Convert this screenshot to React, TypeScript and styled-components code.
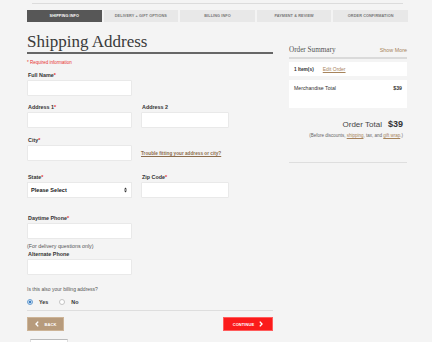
import styled, { createGlobalStyle } from "styled-components";

const GlobalStyle = createGlobalStyle`
  html, body {
    margin: 0;
    padding: 0;
    background: #f4f4f4;
    font-family: "Liberation Sans", Arial, sans-serif;
    color: #333;
  }
`;

const Page = styled.div`
  width: 432px;
  height: 342px;
  overflow: hidden;
  background: #f4f4f4;
`;

const TopRule = styled.div`
  margin: 3px 29px 0 32px;
  height: 1px;
  background: #dcdcdc;
`;

const StepBar = styled.div`
  display: flex;
  gap: 2px;
  margin: 6px 24px 0 27px;
  height: 12px;
`;

const Step = styled.div<{ $active?: boolean }>`
  flex: 1;
  display: flex;
  align-items: center;
  justify-content: center;
  background: ${(p) => (p.$active ? "#575757" : "#e8e8e8")};
  color: ${(p) => (p.$active ? "#fff" : "#777")};
  font-size: 3.8px;
  font-weight: 700;
  letter-spacing: 0.1px;
  text-transform: uppercase;
`;

const Content = styled.div`
  display: flex;
  gap: 16px;
  padding: 0 25px 0 27px;
`;

const FormColumn = styled.div`
  width: 246px;
  display: flex;
  flex-direction: column;
`;

const Heading = styled.h1`
  margin: 9px 0 0;
  font-family: "Liberation Serif", "Times New Roman", serif;
  font-weight: 400;
  font-size: 17px;
  line-height: 21px;
  color: #3a3a3a;
  border-bottom: 2px solid #666;
`;

const Required = styled.div`
  margin-top: 6px;
  font-size: 4.5px;
  line-height: 6px;
  color: #e8312f;
`;

const Row = styled.div<{ $mt: number }>`
  display: grid;
  grid-template-columns: 105px 88px;
  column-gap: 9px;
  margin-top: ${(p) => p.$mt}px;
`;

const Field = styled.div`
  display: flex;
  flex-direction: column;
`;

const Label = styled.label`
  display: block;
  height: 8px;
  line-height: 7px;
  font-size: 5.4px;
  font-weight: 700;
  color: #333;
  padding-left: 1px;
`;

const Star = styled.span`
  color: #e8312f;
`;

const Input = styled.div<{ $h?: number }>`
  height: ${(p) => p.$h ?? 16}px;
  box-sizing: border-box;
  background: #fff;
  border: 1px solid #e9e9e9;
  border-radius: 1px;
`;

const Select = styled.div`
  height: 16px;
  box-sizing: border-box;
  background: #fff;
  border: 1px solid #e9e9e9;
  display: flex;
  align-items: center;
  justify-content: space-between;
  padding: 0 4px 0 3px;
  font-size: 5.6px;
  font-weight: 700;
  color: #222;
`;

const TroubleLink = styled.a`
  align-self: end;
  padding-bottom: 5px;
  font-size: 4.7px;
  font-weight: 700;
  color: #8c6d4c;
  text-decoration: underline;
`;

const Note = styled.div<{ $mt: number; $size?: number }>`
  margin-top: ${(p) => p.$mt}px;
  font-size: ${(p) => p.$size ?? 5.3}px;
  line-height: 7px;
  color: #555;
`;

const SingleField = styled.div<{ $mt: number }>`
  width: 105px;
  margin-top: ${(p) => p.$mt}px;
`;

const RadioRow = styled.div`
  display: flex;
  align-items: center;
  gap: 3px;
  margin-top: 5px;
  height: 8px;
  font-size: 5.4px;
  font-weight: 700;
  color: #333;
`;

const Radio = styled.span<{ $on?: boolean }>`
  width: 6px;
  height: 6px;
  box-sizing: border-box;
  border-radius: 50%;
  border: 1px solid ${(p) => (p.$on ? "#6a9ed0" : "#c4c4c4")};
  background: ${(p) => (p.$on ? "radial-gradient(circle, #3d7ec2 0 1.4px, #cfe2f5 1.6px)" : "#fff")};
  margin-left: ${(p) => (p.$on ? 0 : 8)}px;
  margin-right: 3px;
`;

const Separator = styled.div<{ $mt: number }>`
  margin-top: ${(p) => p.$mt}px;
  height: 1px;
  background: #dedede;
`;

const ButtonRow = styled.div`
  display: flex;
  justify-content: space-between;
  margin-top: 6px;
`;

const ActionButton = styled.button<{ $variant: "back" | "next" }>`
  height: 14px;
  width: ${(p) => (p.$variant === "back" ? 37 : 50)}px;
  padding: 0;
  border: 1px solid ${(p) => (p.$variant === "back" ? "#cdb497" : "#ff5c5c")};
  background: ${(p) => (p.$variant === "back" ? "#b79b7c" : "#fb1b1b")};
  color: #fff;
  font-family: "Liberation Sans", Arial, sans-serif;
  font-size: 4px;
  font-weight: 700;
  letter-spacing: 0.1px;
  display: flex;
  align-items: center;
  justify-content: center;
  gap: ${(p) => (p.$variant === "back" ? 6 : 5)}px;
`;

const Chevron = ({ dir }: { dir: "left" | "right" }) => (
  <svg width="4" height="6" viewBox="0 0 4 6">
    <path
      d={dir === "left" ? "M3.2 0.6 L1 3 L3.2 5.4" : "M0.8 0.6 L3 3 L0.8 5.4"}
      fill="none"
      stroke="#fff"
      strokeWidth="1.4"
    />
  </svg>
);

const SelectArrows = () => (
  <svg width="3" height="6" viewBox="0 0 3 6">
    <path d="M0 2.4 L1.5 0.4 L3 2.4 Z M0 3.6 L1.5 5.6 L3 3.6 Z" fill="#333" />
  </svg>
);

const FooterStub = styled.div`
  margin-top: 8px;
  margin-left: 3px;
  width: 36px;
  height: 10px;
  border-top: 1px solid #bbb;
  border-left: 1px solid #ddd;
  border-right: 1px solid #ddd;
  background: #fff;
`;

const SummaryColumn = styled.aside`
  width: 118px;
  margin-top: 21px;
  display: flex;
  flex-direction: column;
`;

const SummaryHeader = styled.div`
  display: flex;
  justify-content: space-between;
  align-items: center;
  height: 14px;
  border-bottom: 2px solid #dadada;
`;

const SummaryTitle = styled.span`
  font-family: "Liberation Serif", "Times New Roman", serif;
  font-size: 7.2px;
  color: #555;
`;

const TanLink = styled.a<{ $size?: number; $underline?: boolean }>`
  color: #a7845c;
  font-size: ${(p) => p.$size ?? 5.6}px;
  text-decoration: ${(p) => (p.$underline ? "underline" : "none")};
`;

const SummaryBox = styled.div<{ $h: number; $mt: number }>`
  margin-top: ${(p) => p.$mt}px;
  height: ${(p) => p.$h}px;
  background: #fff;
  box-sizing: border-box;
  padding: 0 5px;
  font-size: 4.8px;
  color: #333;
`;

const ItemLine = styled.div`
  display: flex;
  align-items: center;
  height: 100%;
  gap: 9px;
`;

const MerchLine = styled.div`
  display: flex;
  justify-content: space-between;
  padding-top: 5px;
  font-size: 5.2px;
`;

const Strong = styled.span`
  font-weight: 700;
`;

const OrderTotal = styled.div`
  margin-top: 11px;
  display: flex;
  justify-content: flex-end;
  align-items: baseline;
  gap: 6px;
  padding-right: 4px;
  line-height: 10px;
  font-size: 8px;
  color: #444;
`;

const TotalValue = styled.span`
  font-size: 9px;
  font-weight: 700;
  color: #333;
`;

const FinePrint = styled.div`
  margin-top: 3px;
  text-align: right;
  padding-right: 4px;
  font-size: 4.5px;
  line-height: 6px;
  color: #666;
`;

const FineLink = styled.a`
  color: #a7845c;
  text-decoration: underline;
`;

const steps = [
  "Shipping Info",
  "Delivery + Gift Options",
  "Billing Info",
  "Payment & Review",
  "Order Confirmation",
];

export default function App() {
  return (
    <Page>
      <GlobalStyle />
      <TopRule />
      <StepBar>
        {steps.map((s, i) => (
          <Step key={s} $active={i === 0}>
            {s}
          </Step>
        ))}
      </StepBar>
      <Content>
        <FormColumn>
          <Heading>Shipping Address</Heading>
          <Required>* Required information</Required>

          <SingleField $mt={6}>
            <Label>
              Full Name<Star>*</Star>
            </Label>
            <Input />
          </SingleField>

          <Row $mt={8}>
            <Field>
              <Label>
                Address 1<Star>*</Star>
              </Label>
              <Input />
            </Field>
            <Field>
              <Label>Address 2</Label>
              <Input />
            </Field>
          </Row>

          <Row $mt={9}>
            <Field>
              <Label>
                City<Star>*</Star>
              </Label>
              <Input />
            </Field>
            <TroubleLink>Trouble fitting your address or city?</TroubleLink>
          </Row>

          <Row $mt={13}>
            <Field>
              <Label>
                State<Star>*</Star>
              </Label>
              <Select>
                <span>Please Select</span>
                <SelectArrows />
              </Select>
            </Field>
            <Field>
              <Label>
                Zip Code<Star>*</Star>
              </Label>
              <Input />
            </Field>
          </Row>

          <SingleField $mt={17}>
            <Label>
              Daytime Phone<Star>*</Star>
            </Label>
            <Input />
          </SingleField>
          <Note $mt={4}>(For delivery questions only)</Note>
          <SingleField $mt={1}>
            <Label>Alternate Phone</Label>
            <Input />
          </SingleField>

          <Note $mt={11} $size={5}>
            Is this also your billing address?
          </Note>
          <RadioRow>
            <Radio $on />
            Yes
            <Radio />
            No
          </RadioRow>
          <Separator $mt={4} />
          <ButtonRow>
            <ActionButton $variant="back">
              <Chevron dir="left" />
              BACK
            </ActionButton>
            <ActionButton $variant="next">
              CONTINUE
              <Chevron dir="right" />
            </ActionButton>
          </ButtonRow>
          <FooterStub />
        </FormColumn>

        <SummaryColumn>
          <SummaryHeader>
            <SummaryTitle>Order Summary</SummaryTitle>
            <TanLink $size={5.4}>Show More</TanLink>
          </SummaryHeader>
          <SummaryBox $mt={3} $h={14}>
            <ItemLine>
              <Strong>1 Item(s)</Strong>
              <TanLink $size={5} $underline>
                Edit Order
              </TanLink>
            </ItemLine>
          </SummaryBox>
          <SummaryBox $mt={4} $h={28}>
            <MerchLine>
              <span>Merchandise Total</span>
              <Strong>$39</Strong>
            </MerchLine>
          </SummaryBox>
          <OrderTotal>
            <span>Order Total</span>
            <TotalValue>$39</TotalValue>
          </OrderTotal>
          <FinePrint>
            (Before discounts, <FineLink>shipping</FineLink>, tax, and{" "}
            <FineLink>gift wrap</FineLink>.)
          </FinePrint>
          <Separator $mt={23} />
        </SummaryColumn>
      </Content>
    </Page>
  );
}
